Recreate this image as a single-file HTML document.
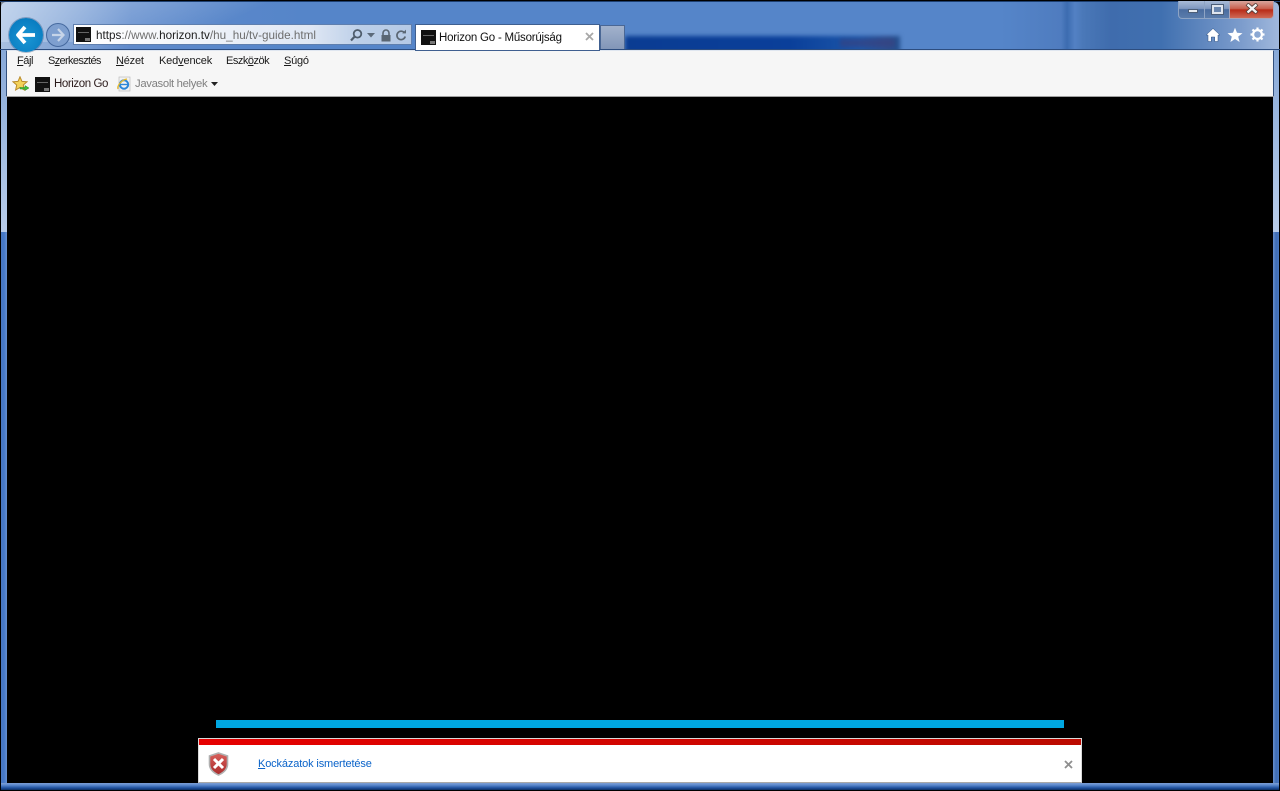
<!DOCTYPE html>
<html lang="hu">
<head>
<meta charset="utf-8">
<title>Horizon Go - Műsorújság</title>
<style>
html,body{margin:0;padding:0;width:1280px;height:791px;overflow:hidden;background:#000}
body{position:relative;font-family:"Liberation Sans",sans-serif;font-size:11.5px;color:#1a1a1a}
.a{position:absolute}
.t{position:absolute;white-space:nowrap;line-height:14px}
u{text-decoration:underline}
.fav{position:absolute;background:#111;overflow:hidden}
.fav:after{content:"";position:absolute;right:1px;bottom:1px;width:5px;height:3px;background:#777}
.fav:before{content:"";position:absolute;left:2px;top:5px;width:11px;height:1px;background:#666}
</style>
</head>
<body>
<!-- frame -->
<div class="a" style="left:0;top:0;width:1280px;height:791px;background:#000"></div>
<div class="a" style="left:0;top:1px;width:1280px;height:1px;background:#1d3f70"></div>
<div class="a" style="left:1px;top:2px;width:1278px;height:48px;background:linear-gradient(90deg,#a9c0e0 0,#8fadd8 40px,#5f8acb 130px,#5585c9 300px,#5585c9 1000px,#4f7cbf 1060px,#3c6cb0 1066px,#5381c4 1074px,#4a78b8 1082px,#3f6cad 1110px,#4070b0 1160px,#7c9ccc 1240px,#a0b8dc 1278px);border-radius:5px 5px 0 0"></div>
<div class="a" style="left:1px;top:2px;width:300px;height:40px;background:linear-gradient(155deg,rgba(210,225,245,.6),rgba(255,255,255,0) 70%)"></div>
<!-- blurred dark strip behind tabs -->
<div class="a" style="left:600px;top:30px;width:320px;height:19px;overflow:hidden">
  <div class="a" style="left:25px;top:6px;width:275px;height:20px;background:linear-gradient(90deg,#0a3c92,#0a3f9a 60%,#1c56a8 85%,#2d4f90 95%,#23508f 100%);filter:blur(2px)"></div>
  <div class="a" style="left:240px;top:9px;width:55px;height:8px;background:#3a3f7c;filter:blur(2px);opacity:.6"></div>
</div>
<div class="a" style="left:0;top:49px;width:1280px;height:1px;background:#2d4d7f"></div>
<!-- side frame -->
<div class="a" style="left:1px;top:50px;width:6px;height:182px;background:linear-gradient(180deg,#88a9d8,#b9cdea)"></div>
<div class="a" style="left:1px;top:232px;width:6px;height:552px;background:linear-gradient(90deg,#4a78c0,#4478c8 50%,#6790cf)"></div>
<div class="a" style="left:1273px;top:50px;width:6px;height:182px;background:linear-gradient(180deg,#88a9d8,#b9cdea)"></div>
<div class="a" style="left:1273px;top:232px;width:6px;height:552px;background:linear-gradient(90deg,#6790cf,#3f6cb4 50%,#4a78c0)"></div>
<div class="a" style="left:1px;top:783px;width:1278px;height:7px;background:linear-gradient(180deg,#7d9ed3 0,#5d8ace 2px,#1e4f9c 5px,#0d2e60 7px)"></div>
<!-- toolbar panel -->
<div class="a" style="left:6px;top:50px;width:1268px;height:47px;background:#f6f6f6;border-top:1px solid #dfe6f0;box-sizing:border-box;border-left:1px solid #33507d;border-right:1px solid #33507d"></div>
<div class="a" style="left:6px;top:96px;width:1268px;height:1px;background:#a0a0a0"></div>
<!-- back button -->
<div class="a" style="left:9px;top:18px;width:34px;height:34px;border-radius:50%;background:radial-gradient(circle at 50% 60%,#1a96d4,#0a7ec2 70%,#0b6ea9);box-shadow:0 0 0 1px rgba(30,70,120,.35)"></div>
<svg class="a" style="left:15px;top:25px" width="22" height="20" viewBox="0 0 22 20"><path d="M10 2 L3 10 L10 18 M4 10 H20" fill="none" stroke="#fff" stroke-width="3.8" stroke-linejoin="round"/></svg>
<!-- forward -->
<svg class="a" style="left:45px;top:22px" width="26" height="26" viewBox="0 0 26 26"><circle cx="13" cy="13" r="11.5" fill="#7e9fcf" stroke="#45699f"/><path d="M13 7 L18.5 13 L13 19 M18 13 H7" fill="none" stroke="#c6d4e8" stroke-width="2.2"/></svg>
<!-- address bar -->
<div class="a" style="left:73px;top:24px;width:339px;height:21px;box-sizing:border-box;border:1px solid #5f7fae;background:linear-gradient(90deg,#fff 0,#f6f8fb 25%,#dfe7f4 70%,#bccfe8 85%,#b5c9e5 100%)"></div>
<div class="fav" style="left:76px;top:27px;width:15px;height:15px"></div>
<div class="t" style="left:96px;top:29px;color:#6e6e6e;font-size:11.7px;letter-spacing:.01px"><span style="color:#1c1c1c">https</span>://www.<span style="color:#1c1c1c">horizon.tv</span>/hu_hu/tv-guide.html</div>
<svg class="a" style="left:349px;top:28px" width="16" height="15" viewBox="0 0 16 15"><circle cx="8.5" cy="5.8" r="3.8" fill="none" stroke="#4f5d6c" stroke-width="1.8"/><path d="M5.6 8.6 L2 12.5" stroke="#4f5d6c" stroke-width="2.2"/></svg>
<svg class="a" style="left:367px;top:33px" width="8" height="5" viewBox="0 0 8 5"><path d="M0 0H8L4 4.5Z" fill="#5c6a7a"/></svg>
<svg class="a" style="left:380px;top:29px" width="12" height="13" viewBox="0 0 12 13"><path d="M3 6V4a3 3 0 0 1 6 0V6" fill="none" stroke="#5a6673" stroke-width="1.6"/><rect x="1.5" y="6" width="9" height="6.5" fill="#5a6673"/></svg>
<svg class="a" style="left:395px;top:29px" width="12" height="13" viewBox="0 0 12 13"><path d="M9.6 4 A4.2 4.2 0 1 0 10.2 7.5" fill="none" stroke="#5a6673" stroke-width="1.7"/><path d="M7.2 4.4 H11 V0.6Z" fill="#5a6673"/></svg>
<!-- active tab -->
<div class="a" style="left:416px;top:25px;width:183px;height:25px;background:#fff;box-shadow:0 0 0 1px #3f5f90"></div>
<div class="fav" style="left:421px;top:30px;width:15px;height:15px"></div>
<div class="t" style="left:439px;top:31px;color:#111;font-size:11.5px;letter-spacing:-.22px">Horizon Go - Műsorújság</div>
<svg class="a" style="left:585px;top:32px" width="9" height="9" viewBox="0 0 9 9"><path d="M1 1L8 8M8 1L1 8" stroke="#a8a8a8" stroke-width="1.8"/></svg>
<!-- new tab -->
<div class="a" style="left:600px;top:25px;width:25px;height:24px;box-sizing:border-box;border:1px solid #4a6795;border-bottom:0;background:linear-gradient(180deg,#a2b2cc,#8296b8)"></div>
<!-- window controls -->
<div class="a" style="left:1178px;top:1px;width:27px;height:18px;box-sizing:border-box;border:1px solid #8ea4c4;border-top:0;border-radius:0 0 0 4px;background:linear-gradient(180deg,#a9bbd6 0,#7f98bf 45%,#4a6c9f 50%,#5a7cab 100%)"></div>
<div class="a" style="left:1204px;top:1px;width:26px;height:18px;box-sizing:border-box;border:1px solid #8ea4c4;border-top:0;background:linear-gradient(180deg,#a9bbd6 0,#7f98bf 45%,#4a6c9f 50%,#5a7cab 100%)"></div>
<div class="a" style="left:1229px;top:1px;width:45px;height:18px;box-sizing:border-box;border:1px solid #a9a5b8;border-top:0;border-radius:0 0 4px 0;background:linear-gradient(180deg,#d9a59c 0,#c9614f 45%,#b92c18 52%,#cf6a56 100%)"></div>
<div class="a" style="left:1188px;top:9px;width:10px;height:4px;background:#e8ecf2;border:1px solid #4c5e78;box-sizing:border-box"></div>
<div class="a" style="left:1212px;top:5px;width:11px;height:9px;box-sizing:border-box;border:2px solid #dfe5ee;outline:1px solid #4c5e78;background:#6a86ae"></div>
<svg class="a" style="left:1245px;top:3px" width="14" height="11" viewBox="0 0 14 11"><path d="M2 1L12 10M12 1L2 10" stroke="#4f3a36" stroke-width="4"/><path d="M2.5 1.5L11.5 9.5M11.5 1.5L2.5 9.5" stroke="#f5f3f2" stroke-width="2.4"/></svg>
<!-- home/star/gear -->
<svg class="a" style="left:1205px;top:27px" width="16" height="16" viewBox="0 0 16 16"><path d="M8 1.5 L15 8 H13 V14.5 H9.7 V10 H6.3 V14.5 H3 V8 H1 Z" fill="#fff" stroke="#2c4f80" stroke-width=".5"/></svg>
<svg class="a" style="left:1227px;top:27px" width="16" height="16" viewBox="0 0 16 16"><path d="M8 .8 L10 5.8 L15.5 6.2 L11.2 9.6 L12.6 15 L8 12 L3.4 15 L4.8 9.6 L.5 6.2 L6 5.8 Z" fill="#fff"/></svg>
<svg class="a" style="left:1250px;top:27px" width="15" height="15" viewBox="0 0 15 15"><circle cx="7.5" cy="7.5" r="4.4" fill="none" stroke="#fff" stroke-width="2.2"/><path d="M7.5 .5V3M7.5 12V14.5M.5 7.5H3M12 7.5H14.5M2.5 2.5L4.3 4.3M10.7 10.7L12.5 12.5M12.5 2.5L10.7 4.3M4.3 10.7L2.5 12.5" stroke="#fff" stroke-width="2.2"/></svg>
<!-- menu -->
<div class="t" style="left:17px;top:54px;font-size:11px;letter-spacing:-.45px"><u>F</u>ájl</div>
<div class="t" style="left:48px;top:54px;font-size:11px;letter-spacing:-.65px">S<u>z</u>erkesztés</div>
<div class="t" style="left:116px;top:54px;font-size:11px;letter-spacing:-.2px"><u>N</u>ézet</div>
<div class="t" style="left:159px;top:54px;font-size:11px;letter-spacing:-.15px">Ked<u>v</u>encek</div>
<div class="t" style="left:226px;top:54px;font-size:11px;letter-spacing:-.5px">Eszk<u>ö</u>zök</div>
<div class="t" style="left:284px;top:54px;font-size:11px;letter-spacing:-.25px"><u>S</u>úgó</div>
<!-- favorites bar -->
<svg class="a" style="left:12px;top:76px" width="18" height="16" viewBox="0 0 18 16"><path d="M8 .8 L10 5.4 L15 5.8 L11.3 9 L12.4 14 L8 11.5 L3.6 14 L4.7 9 L1 5.8 L6 5.4 Z" fill="#f3d25a" stroke="#b98a2a"/><path d="M8 11.5 H13 V9.5 L17 12 L13 14.5 V13 H8Z" fill="#3fbf3a" stroke="#2a8a28" stroke-width=".5"/></svg>
<div class="fav" style="left:35px;top:77px;width:15px;height:15px"></div>
<div class="t" style="left:54px;top:77px;color:#2a1a1a;font-size:11.5px;letter-spacing:-.42px">Horizon Go</div>
<svg class="a" style="left:116px;top:76px" width="16" height="16" viewBox="0 0 16 16"><rect x="3" y="1" width="11" height="14" fill="#f2f2f2" stroke="#bcbcbc" stroke-width=".7"/><circle cx="8" cy="8.5" r="4.2" fill="none" stroke="#2a86d8" stroke-width="2"/><path d="M4.5 8.5H12" stroke="#2a86d8" stroke-width="1.4"/><path d="M2 13C1 10 5 4 11 3" fill="none" stroke="#e5b92c" stroke-width="1.3"/></svg>
<div class="t" style="left:135px;top:77px;color:#7f7f7f;font-size:11.3px;letter-spacing:-.33px">Javasolt helyek</div>
<svg class="a" style="left:211px;top:82px" width="7" height="4" viewBox="0 0 7 4"><path d="M0 0H7L3.5 4Z" fill="#222"/></svg>
<!-- content -->
<div class="a" style="left:7px;top:97px;width:1266px;height:686px;background:#000"></div>
<div class="a" style="left:216px;top:720px;width:848px;height:8px;background:#00a7e1"></div>
<!-- notification bar -->
<div class="a" style="left:198px;top:738px;width:884px;height:45px;background:#fff;box-sizing:border-box;border:1px solid #d9d9d9;border-bottom-color:#a8a8a8"></div>
<div class="a" style="left:199px;top:739px;width:882px;height:6px;background:linear-gradient(90deg,#e60000,#bb0a00)"></div>
<svg class="a" style="left:208px;top:752px" width="21" height="24" viewBox="0 0 21 24"><defs><linearGradient id="s" x1="0" y1="0" x2="0" y2="1"><stop offset="0" stop-color="#d9605c"/><stop offset="1" stop-color="#a92a2a"/></linearGradient></defs><path d="M10.5 1 L19.5 4 V12 C19.5 17.5 15 21 10.5 23 C6 21 1.5 17.5 1.5 12 V4 Z" fill="url(#s)" stroke="#b0b0b0" stroke-width="1.6"/><path d="M6 7 L15 16 M15 7 L6 16" stroke="#fff" stroke-width="3"/></svg>
<div class="t" style="left:258px;top:757px;color:#0a63c9;font-size:11px;letter-spacing:-.14px"><u>K</u>ockázatok ismertetése</div>
<svg class="a" style="left:1064px;top:760px" width="9" height="9" viewBox="0 0 9 9"><path d="M1 1L8 8M8 1L1 8" stroke="#8f8f8f" stroke-width="1.8"/></svg>
</body>
</html>
